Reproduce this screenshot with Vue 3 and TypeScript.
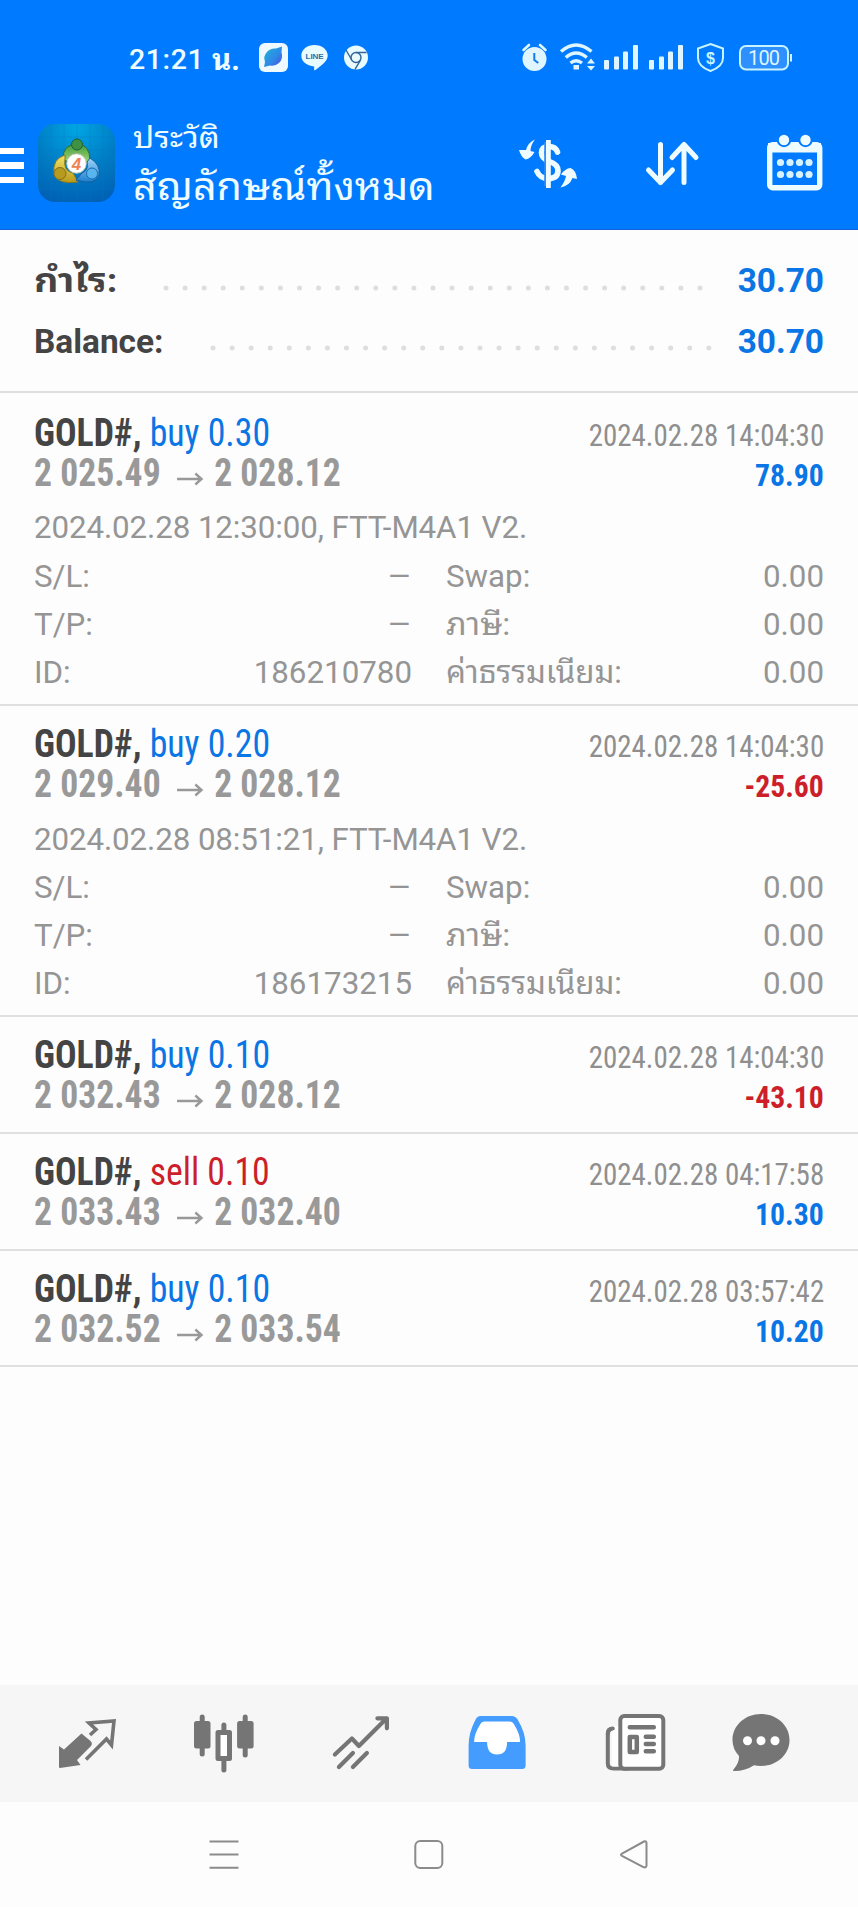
<script setup lang="ts">
interface Deal {
  side: 'buy' | 'sell'
  volume: string
  open: string
  close: string
  time: string
  profit: string
  opened?: string
  id?: string
}

const totals = [
  { label: 'กำไร:', value: '30.70', start: 166, dots: 29, thai: true },
  { label: 'Balance:', value: '30.70', start: 213, dots: 27, thai: false },
]

const deals: Deal[] = [
  { side: 'buy', volume: '0.30', open: '2 025.49', close: '2 028.12', time: '2024.02.28 14:04:30', profit: '78.90', opened: '2024.02.28 12:30:00, FTT-M4A1 V2.', id: '186210780' },
  { side: 'buy', volume: '0.20', open: '2 029.40', close: '2 028.12', time: '2024.02.28 14:04:30', profit: '-25.60', opened: '2024.02.28 08:51:21, FTT-M4A1 V2.', id: '186173215' },
  { side: 'buy', volume: '0.10', open: '2 032.43', close: '2 028.12', time: '2024.02.28 14:04:30', profit: '-43.10' },
  { side: 'sell', volume: '0.10', open: '2 033.43', close: '2 032.40', time: '2024.02.28 04:17:58', profit: '10.30' },
  { side: 'buy', volume: '0.10', open: '2 032.52', close: '2 033.54', time: '2024.02.28 03:57:42', profit: '10.20' },
]

const details = (d: Deal) => [
  { label: 'S/L:', value: '–', label2: 'Swap:', value2: '0.00', kind: '' },
  { label: 'T/P:', value: '–', label2: 'ภาษี:', value2: '0.00', kind: 'tax' },
  { label: 'ID:', value: d.id, label2: 'ค่าธรรมเนียม:', value2: '0.00', kind: 'fee' },
]
</script>

<template>
  <div class="screen">
    <header class="top">
      <div class="status">
        <span class="clock">21:21</span><span class="clock-th">น.</span>
        <svg class="apps" viewBox="256 40 116 36" width="116" height="36">
          <defs>
            <linearGradient id="leaf" x1="0" y1="0" x2="1" y2="1">
              <stop offset="0" stop-color="#20b8d8" /><stop offset=".6" stop-color="#2f86e8" /><stop offset="1" stop-color="#5546d8" />
            </linearGradient>
          </defs>
          <rect x="259" y="43" width="29" height="29" rx="6" fill="#eefaff" />
          <path d="M264 67l1-5q-2-6 2-10 3-4 9-3.500l6-2-.5 6q2 6-2.500 10.500-4 3.500-9 2.500z" fill="url(#leaf)" />
          <path d="M314.500 45c7.500 0 13.200 4.700 13.200 10.600 0 5-5 9.500-12.700 14.600-1 .6-1-.8-.8-3.800-7.500-.3-12.900-4.900-12.900-10.800S307 45 314.500 45z" fill="#e8fbff" />
          <text x="314.600" y="58.600" text-anchor="middle" class="line-label" textLength="18">LINE</text>
          <circle cx="356" cy="57.500" r="12" fill="#e8fbff" />
          <g fill="none" stroke="#35649a" stroke-width="1.400"><circle cx="356" cy="57.500" r="5" /><path d="M356 52.500h10.500M351.500 59.500l-5.500-9.500M360.300 60.300L355 69.400" /></g>
        </svg>
        <svg class="signals" viewBox="518 40 278 36" width="278" height="36" fill="#dff5ff">
          <circle cx="534.500" cy="59" r="12" />
          <path d="M523.500 50l5.500-5M545.500 50l-5.500-5" stroke="#dff5ff" stroke-width="2.600" stroke-linecap="round" />
          <path d="M534.300 53v7l4 3" fill="none" stroke="#147bea" stroke-width="2" />
          <g fill="none" stroke="#dff5ff" stroke-width="3.400"><path d="M561 51.500Q576 38.500 591.500 51.500" /><path d="M565.800 57.500Q576 48.500 586.800 57.500" /><path d="M570.500 63Q576 58.500 582 63" /></g>
          <rect x="573.500" y="65" width="5.500" height="4.500" />
          <path d="M591 58.500l4 5h-8zM591 70.500l4-4.500h-8z" />
          <g v-for="x in [604, 649]" :key="x">
            <rect :x="x" y="60" width="5" height="9.500" rx="1" /><rect :x="x + 10" y="56.500" width="5" height="13" rx="1" />
            <rect :x="x + 19" y="51.500" width="5" height="18" rx="1" /><rect :x="x + 29" y="45" width="5" height="24.500" rx="1" />
          </g>
          <path d="M710.500 44l12.500 4.500v9.500q0 8.500-12.500 13-12.500-4.500-12.500-13v-9.500z" fill="none" stroke="#c8f4ff" stroke-width="2" />
          <text x="710.500" y="63.500" text-anchor="middle" class="shield">$</text>
          <rect x="740" y="46" width="48" height="23.500" rx="6" fill="#2e8fff" stroke="#c8f4ff" stroke-width="2" />
          <path d="M791 54v7.500" stroke="#c8f4ff" stroke-width="2" />
          <text x="764" y="65" text-anchor="middle" class="charge" textLength="32">100</text>
        </svg>
      </div>

      <div class="bar">
        <div class="burger"><i></i><i></i><i></i></div>
        <svg class="logo" viewBox="0 0 78 78" width="78" height="78">
          <defs>
            <radialGradient id="sea" cx=".5" cy=".05" r="1"><stop offset="0" stop-color="#00a6e4" /><stop offset=".55" stop-color="#007cc4" /><stop offset="1" stop-color="#0060b4" /></radialGradient>
            <linearGradient id="gr" x2="0" y2="1"><stop offset="0" stop-color="#3f9a3c" /><stop offset="1" stop-color="#a6d878" /></linearGradient>
            <linearGradient id="ye" x2="0" y2="1"><stop offset="0" stop-color="#f5e36c" /><stop offset="1" stop-color="#b89a18" /></linearGradient>
            <linearGradient id="bl" x2="0" y2="1"><stop offset="0" stop-color="#9ed6fa" /><stop offset="1" stop-color="#1d7fd0" /></linearGradient>
          </defs>
          <rect width="77" height="78" rx="17" fill="url(#sea)" />
          <path d="M13 0v78M26 0v78M39 0v78M52 0v78M65 0v78M0 13h77M0 26h77M0 39h77M0 52h77M0 65h77" stroke="#0a78bd" stroke-width=".6" opacity=".55" />
          <path d="M25 35q0-15 14-15 13 0 13 17l-5 2q-3-9-9-9-5 0-8 8z" fill="url(#gr)" stroke="#2b6d38" />
          <path d="M27 31q-13 4-11 19 3 11 24 8l-5-9q-10-2-8-14z" fill="url(#ye)" stroke="#897820" />
          <path d="M52 34q11 7 9 17-4 11-23 5l6-7q7-3 5-11z" fill="url(#bl)" stroke="#17609f" />
          <circle cx="39" cy="20.500" r="5.500" fill="#3f9143" stroke="#215e31" />
          <circle cx="22" cy="49.500" r="6" fill="#b79a20" stroke="#80701c" /><circle cx="54" cy="49.500" r="5.500" fill="#57b4ee" stroke="#1b6caf" />
          <circle cx="38.500" cy="39.500" r="9.700" fill="#fff" stroke="#c9d1bf" />
          <text x="38.500" y="45.500" text-anchor="middle" class="four">4</text>
        </svg>
        <div class="titles">
          <div class="caption">ประวัติ</div>
          <div class="title">สัญลักษณ์ทั้งหมด</div>
        </div>
        <svg class="actions" viewBox="516 130 310 64" width="310" height="64" fill="none" stroke="#eefcff">
          <path d="M557.500 152q-2-5.500-8.500-5.500-7.500 0-7.500 6.500 0 5.500 8 8.500 8.500 3 8.500 9 0 8-9.500 8-8.500 0-11.500-7" stroke-width="5.600" stroke-linecap="round" />
          <path d="M545.200 142v44" stroke="#2d8cff" stroke-width="2" /><path d="M548.400 140v48" stroke-width="4.800" />
          <path d="M535 139.500q-7 3-9 10.500l-7 0q2 7 6.500 9.500 5.500-1 9-7.500l-4-1q0-6 4.500-11.500zM560.500 187.500q5-7 5.500-11.500l-5-1.500q4-6 9.500-6.500 5.500 2 6.500 11l-4.500-1q-3 8-12 9.500z" fill="#eefcff" stroke="none" />
          <g stroke-width="5" stroke-linecap="round" stroke-linejoin="round"><path d="M660.500 144.500v38M648.500 170l12 12.500 12-12.500M684 182.500v-38M672 157.500l12-13 12 13" /></g>
          <rect x="769.700" y="144.700" width="50" height="43" rx="3" stroke-width="5.400" />
          <path d="M768 143h53v9.500h-53z" fill="#eefcff" stroke="none" />
          <g fill="#eefcff" stroke="#007bff" stroke-width="2"><circle cx="784" cy="140" r="6.200" /><circle cx="805.500" cy="140" r="6.200" /></g>
          <g fill="#d8f3ff" stroke="none"><template v-for="y in [162.500, 174.500]" :key="y"><circle v-for="x in [780.500, 790, 799.500, 809]" :key="x" :cx="x" :cy="y" r="3.600" /></template></g>
        </svg>
      </div>
    </header>

    <section class="totals">
      <div v-for="t in totals" :key="t.label" class="total">
        <span class="total-label" :class="{ thai: t.thai }">{{ t.label }}</span>
        <svg class="leader" viewBox="160 0 560 10" width="560" height="10"><circle v-for="n in t.dots" :key="n" :cx="t.start + (n - 1) * 19.070" cy="5" r="2.500" fill="#dedede" /></svg>
        <span class="total-value">{{ t.value }}</span>
      </div>
    </section>

    <main class="deals">
      <article v-for="(d, i) in deals" :key="i" class="deal" :class="{ open: d.opened }">
        <div class="row">
          <span class="name"><b>GOLD#,</b> <span :class="d.side">{{ d.side }} {{ d.volume }}</span></span>
          <span class="time">{{ d.time }}</span>
        </div>
        <div class="row">
          <span class="prices">{{ d.open }}<svg class="arrow" viewBox="0 0 57 20"><path d="M17.500 12h25M37 6.500l6.500 5.500-6.500 5.500" /></svg>{{ d.close }}</span>
          <span class="profit" :class="d.profit.startsWith('-') ? 'sell' : 'buy'">{{ d.profit }}</span>
        </div>
        <div v-if="d.opened" class="more">
          <div class="line opened">{{ d.opened }}</div>
          <div v-for="r in details(d)" :key="r.label" class="line grid">
            <span>{{ r.label }}</span><span class="num" :class="{ dash: r.value === '–' }">{{ r.value }}</span>
            <span class="second" :class="r.kind">{{ r.label2 }}</span><span class="num">{{ r.value2 }}</span>
          </div>
        </div>
      </article>
    </main>

    <nav class="tabs">
      <svg viewBox="55 1710 64 64" fill="none" stroke="#757575" stroke-width="3.600">
        <path d="M81.500 1733.500l9 7.500q2.500 2.500.5 5l-14 14 3.500 5-20.500 3q-1 0-1-1.500v-20.500l5 3.500z" fill="#757575" stroke="none" />
        <path d="M90 1735l6-5.500-7-6.500 25-2-2.500 24-5-6L86 1759.500" />
      </svg>
      <svg viewBox="189.800 1710 64 64" fill="#757575" stroke="#757575">
        <path d="M202 1717v37M245 1717v38M223.700 1725v8M223.700 1759v11" stroke-width="5" stroke-linecap="round" />
        <rect x="193.800" y="1721" width="16.500" height="27.500" rx="2.500" stroke="none" /><rect x="236.900" y="1721" width="16.500" height="27.500" rx="2.500" stroke="none" />
        <rect x="217.800" y="1732.500" width="11.500" height="26" stroke-width="5" stroke-linejoin="round" fill="#fff" />
      </svg>
      <svg viewBox="324.600 1710 64 64" fill="none" stroke="#757575" stroke-width="4.200" stroke-linecap="round" stroke-linejoin="round">
        <path d="M334.500 1754.500l17-16 7 7.500 27-27M377 1718.300h9.500v10M338.500 1767l14-14M352.500 1767l14-14" />
      </svg>
      <svg viewBox="459.400 1710 64 64">
        <path d="M481 1716h31q4 0 6 3.500 8 13 8 26v20q0 3.500-3.500 3.500h-50q-3.500 0-3.500-3.500v-20q0-13 7-26 1.500-3.500 5-3.500z" fill="#449cff" />
        <path d="M485 1721.500h25q3 0 4.500 3 6 9.500 6 17.500h-13q0 12.500-10 12.500t-10-12.500h-13q0-8 6-17.500 1.500-3 4.500-3z" fill="#fff" />
      </svg>
      <svg viewBox="594.200 1710 64 64" fill="none" stroke="#757575" stroke-width="4">
        <path d="M621 1728.500h-7q-6 0-6 5v30q0 5 6 5h14" fill="none" stroke-linecap="round" />
        <rect x="612" y="1726" width="9" height="40.500" fill="#fff" stroke="none" />
        <path d="M608 1734q0-5 5-5.500" stroke-linecap="round" />
        <rect x="620.500" y="1716" width="43" height="52.700" rx="4" fill="#fff" />
        <path d="M630 1727.300h24M646 1736.800h8M646 1744h8M646 1751.200h8" stroke-width="4.500" stroke-linecap="round" />
        <rect x="630" y="1737" width="7" height="15" stroke-width="4.500" stroke-linejoin="round" />
      </svg>
      <svg viewBox="729 1710 64 64">
        <path d="M761 1714c16 0 28.500 11.500 28.500 26s-12.500 26-28.500 26q-4 0-7-.8-9 6-20 5.800-1.500 0-.5-1.500 6-7 5.500-13.500-6.500-7-6.500-16c0-14.500 12.500-26 28.500-26z" fill="#757575" />
        <g fill="#fff"><circle cx="747.500" cy="1740.700" r="4.500" /><circle cx="761" cy="1740.700" r="4.500" /><circle cx="775" cy="1740.700" r="4.500" /></g>
      </svg>
    </nav>

    <footer class="system">
      <svg viewBox="209 1839 30 30"><path d="M209.500 1841.500h29M209.500 1854.500h29M209.500 1867.700h29" /></svg>
      <svg viewBox="414 1839 30 30"><rect x="415.300" y="1841" width="27" height="27" rx="5" /></svg>
      <svg viewBox="619 1839 30 30"><path d="M644 1841.500l-22 12q-2 1.200 0 2.400l19 10q5 3 5.500 0v-23q-.4-2.400-2.500-1.400z" /></svg>
    </footer>
  </div>
</template>

<style>
html, body { margin: 0; background: #fdfdfd; }
</style>

<style scoped>
.screen { width: 858px; height: 1907px; display: flex; flex-direction: column; background: #fdfdfd; font-family: Roboto, "Noto Sans Thai Looped", "Noto Looped Thai", Loma, Garuda, Waree, "Noto Sans Thai", "Noto Sans", sans-serif; color: #444; white-space: nowrap; overflow: hidden; }
.top { height: 230px; box-sizing: border-box; background: #007bff; border-bottom: 1.500px solid #1263d8; color: #effcff; flex: none; }
.status { display: flex; height: 80px; padding-top: 40px; padding-left: 129px; box-sizing: border-box; font-size: 28.500px; line-height: 40px; }
.clock { width: 83px; letter-spacing: .6px; font-weight: 500; }
.clock-th { width: 44px; font-weight: 700; font-size: 29.500px; }
.signals { margin-left: 146px; }
.line-label { font: bold 8px "Liberation Sans", sans-serif; fill: #2f6ca8; }
.shield { font: bold 16px "Liberation Sans", sans-serif; fill: #c8f4ff; }
.charge { font: 20px Roboto, sans-serif; }
.bar { display: flex; align-items: flex-start; padding-top: 44px; }
.burger { width: 24px; margin-top: 24px; display: flex; flex-direction: column; gap: 8px; }
.burger i { height: 6.300px; background: #fff; }
.logo { margin-left: 14px; flex: none; }
.four { font: italic bold 17px "Liberation Sans", sans-serif; fill: #ee8250; }
.titles { margin-left: 17px; width: 383px; margin-top: -8px; }
.caption { font-size: 30px; line-height: 44px; transform: scaleX(1.095); transform-origin: 0 50%; }
.title { font-size: 38px; line-height: 55px; transform: scaleX(1.087); transform-origin: 0 50%; }
.actions { margin-top: 6px; flex: none; }
.totals { height: 163px; box-sizing: border-box; border-bottom: 2px solid #dedede; padding: 21.300px 34px 0; flex: none; }
.total { display: flex; height: 60.500px; line-height: 60px; align-items: flex-start; font-weight: 700; font-size: 33.400px; }
.total-label { width: 126px; }
.total-label.thai { transform: scaleX(1.13); transform-origin: 0 50%; }
.leader { margin-top: 31.700px; flex: none; }
.total-value { flex: 1; text-align: right; color: #0a75e4; }
.deals { padding-top: 1.700px; flex: 1; }
.deal { height: 116.670px; box-sizing: border-box; border-bottom: 2px solid #e0e0e0; padding: 18px 34px 0; }
.deal.open { height: 311.330px; }
.row { display: flex; justify-content: space-between; align-items: baseline; height: 40px; line-height: 40px; font-family: "Roboto Condensed", Roboto, sans-serif; font-stretch: 75%; }
.row > .name { font-size: 38px; transform: scaleX(.941); transform-origin: 0 50%; }
.row > .time { font-size: 31px; color: #8f8f8f; transform: scaleX(.934); transform-origin: 100% 50%; }
.row > .prices { font-size: 38px; font-weight: 700; color: #999; transform: scaleX(.938); transform-origin: 0 50%; }
.arrow { width: 57px; height: 20px; vertical-align: -1px; fill: none; stroke: #999; stroke-width: 2.600; }
.row > .profit { font-size: 31px; font-weight: 700; transform: scaleX(.958); transform-origin: 100% 50%; }
.buy { color: #0a75e4; }
.sell { color: #cc1f2a; }
.more { margin-top: 11.700px; font-size: 31.300px; color: #959595; }
.line { height: 48.200px; line-height: 48.200px; }
.opened { letter-spacing: -.1px; }
.grid { display: grid; grid-template-columns: 80px 298px 212px 1fr; }
.num { text-align: right; }
.dash { transform: scaleX(1.2); transform-origin: 100% 50%; }
.second { margin-left: 34px; transform-origin: 0 50%; }
.tax { transform: scaleX(1.05); }
.tabs { height: 117px; box-sizing: border-box; padding: 25px 65px 0 55px; display: flex; justify-content: space-between; background: #f6f6f6; flex: none; }
.tabs svg { width: 64px; height: 64px; overflow: visible; }
.system { height: 105px; box-sizing: border-box; padding: 37px 209px 0; display: flex; justify-content: space-between; flex: none; }
.system svg { width: 30px; height: 30px; overflow: visible; fill: none; stroke: #8b8b8b; stroke-width: 2; }
</style>
